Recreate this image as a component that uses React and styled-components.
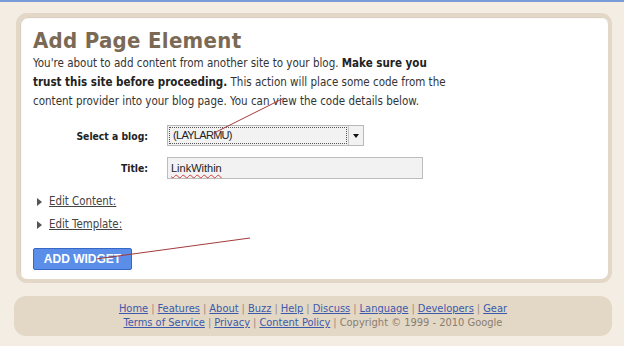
import React from 'react'
import styled, { createGlobalStyle } from 'styled-components'

const Global = createGlobalStyle`
  html, body { margin: 0; padding: 0; }
  body {
    background: #f4ede4;
    font-family: "DejaVu Sans Condensed", "DejaVu Sans", sans-serif;
    color: #333;
    width: 624px;
    height: 346px;
    overflow: hidden;
    border-top: 2px solid #7b9ad8;
    box-sizing: border-box;
  }
`

const Page = styled.div`
  position: relative;
  padding: 11px 12px 0 16px;
`

const Panel = styled.div`
  background: #fff;
  border: 4px solid #e3d8c8;
  border-radius: 11px;
  padding: 11px 14px 9px 13px;
  height: 242px;
  box-sizing: content-box;
  box-shadow: inset 1px 1px 1px #d6cab8;
`

const Title = styled.h1`
  margin: 0;
  font-family: "DejaVu Sans Condensed", sans-serif;
  font-size: 22px;
  font-weight: bold;
  color: #7a6a55;
  line-height: 26px;
  letter-spacing: 0.3px;
`

const Intro = styled.p`
  margin: 0;
  width: 416px;
  font-size: 11.5px;
  line-height: 19px;
  color: #333;
  b { color: #222; }
`

const Form = styled.div`
  display: grid;
  grid-template-columns: 115px auto;
  column-gap: 19px;
  row-gap: 11px;
  margin-top: 14px;
  align-items: center;
`

const Label = styled.label`
  text-align: right;
  font-size: 10.3px;
  font-weight: bold;
  color: #222;
`

const SelectBox = styled.div`
  display: flex;
  width: 197px;
  height: 21px;
  border: 1px solid #b8b8b8;
  background: #f2f2f2;
  box-sizing: border-box;
`

const SelectValue = styled.div`
  flex: 1;
  margin: 1px;
  border: 1px dotted #555;
  font-size: 11px;
  line-height: 15px;
  padding-left: 3px;
  color: #222;
  letter-spacing: -0.7px;
  font-family: "Liberation Sans", sans-serif;
`

const SelectArrow = styled.div`
  width: 14px;
  border-left: 1px solid #c4c4c4;
  display: flex;
  align-items: center;
  justify-content: center;
  &::after {
    content: '';
    border-left: 3px solid transparent;
    border-right: 3px solid transparent;
    border-top: 4px solid #111;
  }
`

const TextInput = styled.div`
  width: 256px;
  height: 22px;
  border: 1px solid #bcbcbc;
  background: #f2f2f2;
  box-sizing: border-box;
  font-family: "Liberation Sans", sans-serif;
  font-size: 11px;
  line-height: 20px;
  padding-left: 3px;
  color: #222;
  span {
    text-decoration: underline wavy #d04040;
    text-decoration-thickness: 1px;
    text-underline-offset: 2px;
  }
`

const Toggle = styled.div`
  display: flex;
  align-items: center;
  gap: 7px;
  margin-left: 4px;
  margin-top: ${p => p.first ? '15px' : '8px'};
  font-size: 11.4px;
  line-height: 15px;
  color: #444;
  &::before {
    content: '';
    border-top: 4px solid transparent;
    border-bottom: 4px solid transparent;
    border-left: 5px solid #555;
  }
  a { color: #444; text-decoration: underline; }
`

const Button = styled.button`
  display: block;
  margin-top: 16px;
  width: 99px;
  height: 22px;
  background: #5a8ee9;
  border: 1px solid #3768c6;
  border-radius: 2px;
  color: #fff;
  font-family: "Liberation Sans", sans-serif;
  font-weight: bold;
  font-size: 12px;
  padding: 0;
`

const Footer = styled.div`
  margin: 13px 0 0 -2px;
  background: #e3d7c5;
  border-radius: 12px;
  height: 40px;
  display: flex;
  flex-direction: column;
  align-items: center;
  justify-content: center;
  font-size: 11px;
  line-height: 14px;
  color: #8a7e70;
`

const FootRow = styled.div`
  a { color: #3b5aab; text-decoration: underline; }
`

const Sep = styled.span`
  color: #9a8e80;
  margin: 0 3px;
`

const Marks = styled.svg`
  position: absolute;
  left: 0;
  top: 0;
  pointer-events: none;
`

const navLinks = ['Home', 'Features', 'About', 'Buzz', 'Help', 'Discuss', 'Language', 'Developers', 'Gear']
const legalLinks = ['Terms of Service', 'Privacy', 'Content Policy']

const joinLinks = (list) => list.map((l, i) => (
  <React.Fragment key={l}>
    {i > 0 && <Sep>|</Sep>}
    <a href="#">{l}</a>
  </React.Fragment>
))

const App = () => {
  return (
    <>
      <Global />
      <Page>
        <Panel>
          <Title>Add Page Element</Title>
          <Intro>
            You're about to add content from another site to your blog. <b>Make sure you trust this site before proceeding.</b> This action will place some code from the content provider into your blog page. You can view the code details below.
          </Intro>
          <Form>
            <Label>Select a blog:</Label>
            <SelectBox>
              <SelectValue>(LAYLARMU)</SelectValue>
              <SelectArrow />
            </SelectBox>
            <Label>Title:</Label>
            <TextInput><span>LinkWithin</span></TextInput>
          </Form>
          <Toggle first><a href="#">Edit Content:</a></Toggle>
          <Toggle><a href="#">Edit Template:</a></Toggle>
          <Button>ADD WIDGET</Button>
        </Panel>
        <Footer>
          <FootRow>{joinLinks(navLinks)}</FootRow>
          <FootRow>{joinLinks(legalLinks)}<Sep>|</Sep>Copyright © 1999 - 2010 Google</FootRow>
        </Footer>
        <Marks width="624" height="346">
          <line x1="284" y1="96" x2="214" y2="131" stroke="#a33a3a" strokeWidth="1" />
          <line x1="250" y1="236" x2="96" y2="257" stroke="#a33a3a" strokeWidth="1" />
        </Marks>
      </Page>
    </>
  )
}

export default App
